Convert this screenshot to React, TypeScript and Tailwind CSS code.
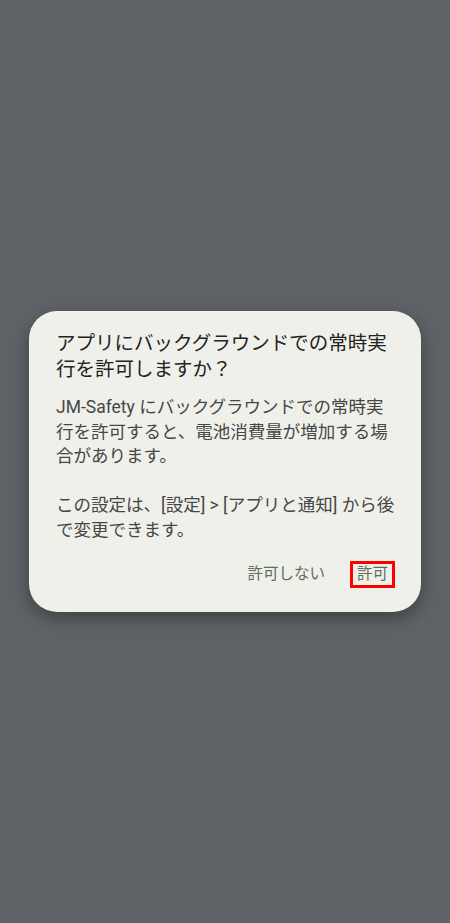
const jp = { fontFamily: 'Roboto, "Noto Sans CJK JP", "Noto Sans", sans-serif' };

export default function App() {
  return (
    <div className="min-h-[923px] w-full bg-[#5f6266] flex flex-col" style={jp}>
      <div className="h-[311px]" />
      <div className="mx-[29px] rounded-[28px] bg-[#f0f0eb] pl-[27px] pr-[27px] pt-[20px] pb-[24px] shadow-[0_6px_18px_rgba(0,0,0,0.35)]">
        <h1 className="text-[19.5px] leading-[25.5px] text-[#232321] whitespace-nowrap">
          アプリにバックグラウンドでの常時実<br />行を許可しますか？
        </h1>
        <div className="mt-[13px] text-[17.5px] leading-[24.5px] text-[#454744] whitespace-nowrap">
          <p>
            JM-Safety にバックグラウンドでの常時実<br />
            行を許可すると、電池消費量が増加する場<br />
            合があります。
          </p>
          <p className="mt-[24.5px]">
            この設定は、[設定] &gt; [アプリと通知] から後<br />
            で変更できます。
          </p>
        </div>
        <div className="mt-[19px] flex justify-end items-center">
          <button className="px-[4px] text-[15.5px] leading-[21px] text-[#5a6f59]">許可しない</button>
          <button className="ml-[21px] -mr-[1px] border-[3px] border-[#ff0000] px-[4px] text-[15.5px] leading-[21px] text-[#5a6f59]">
            許可
          </button>
        </div>
      </div>
    </div>
  );
}
